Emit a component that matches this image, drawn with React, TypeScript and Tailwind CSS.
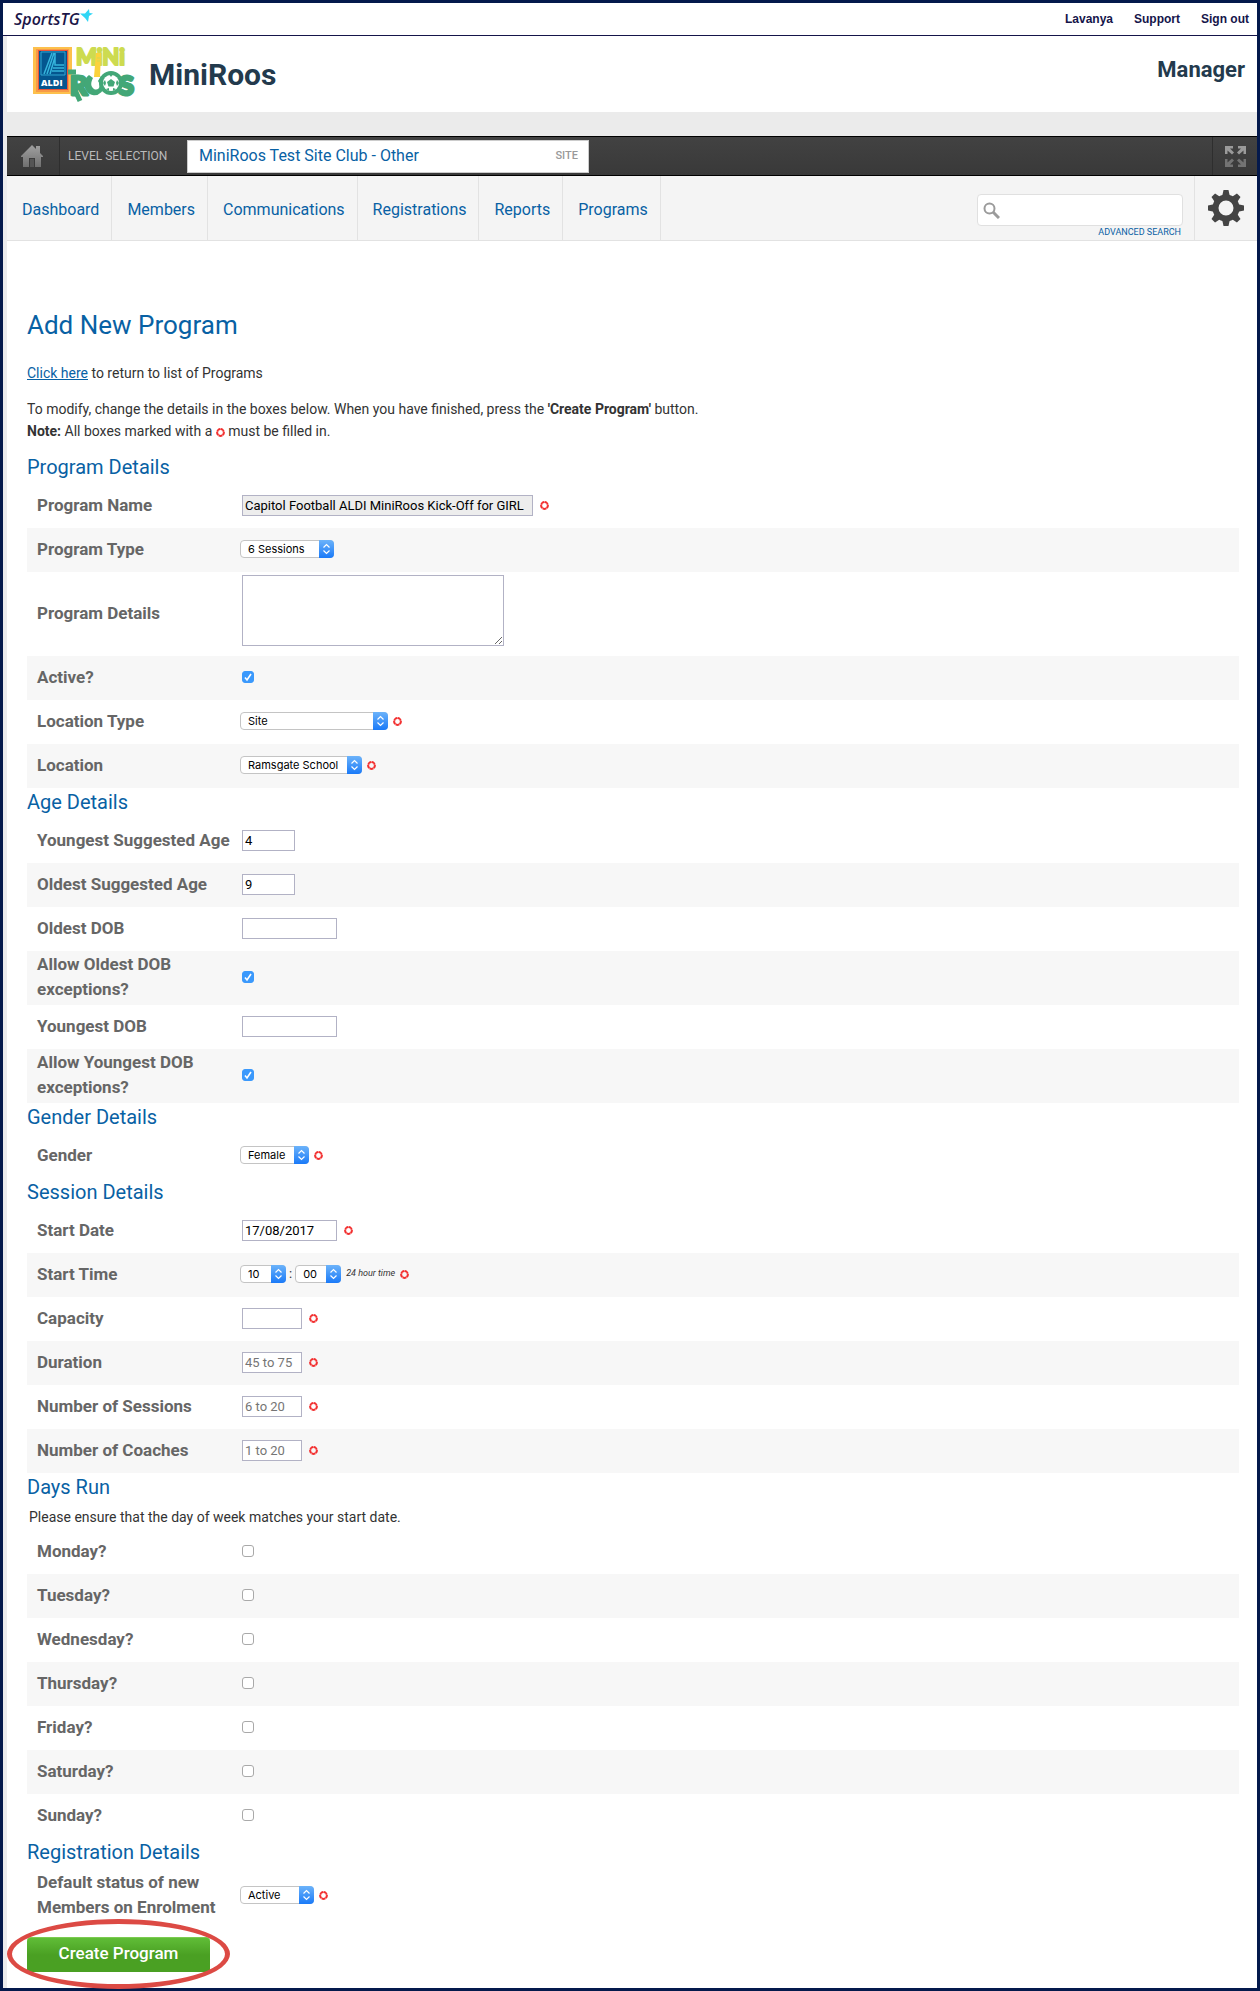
import React, { useState } from "react"

type Option = { label: string; width: string };

const navItems = ["Dashboard", "Members", "Communications", "Registrations", "Reports", "Programs"];
const days = ["Monday", "Tuesday", "Wednesday", "Thursday", "Friday", "Saturday", "Sunday"];

const Required = () => (
  <svg width="9" height="9" viewBox="0 0 9 9" className="inline-block shrink-0" aria-hidden="true">
    <circle cx="4.500" cy="4.500" r="3.400" fill="none" stroke="#f22e2e" strokeWidth="2" />
    <path stroke="#fff" strokeWidth=".5" d="M4.500 0v1.500M0 3.300l1.500.5M9 3.300l-1.500.5M1.800 8.200l1-1.500M7.200 8.200l-1-1.500" />
  </svg>
);

const HomeIcon = () => (
  <svg width="22" height="23" viewBox="0 0 22 23" aria-hidden="true">
    <defs>
      <linearGradient id="home" x1="0" y1="0" x2="0" y2="1">
        <stop offset="0" stopColor="#a0a0a0" />
        <stop offset="1" stopColor="#707070" />
      </linearGradient>
    </defs>
    <path fill="url(#home)" d="M11 0l4 4V1h4v7l3 3v1h-2v10h-6v-9H8v9H2V12H0v-1z" />
    <path fill="#555" d="M9 14h4v8H9z" />
  </svg>
);

const ExpandIcon = () => (
  <svg width="21" height="21" viewBox="0 0 21 21" fill="#9a9a9a" aria-hidden="true">
    <path d="M0 0h8v2.500H5L9 6.500 7 8.500 2.500 4.500V8H0z" />
    <path d="M21 0h-8v2.500h3L12 6.500l2 2 4.500-4V8H21z" />
    <path fill="#737373" d="M0 21h8v-2.500H5L9 14.500l-2-2-4.500 4V13H0z" />
    <path fill="#737373" d="M21 21h-8v-2.500h3L12 14.500l2-2 4.500 4V13H21z" />
  </svg>
);

const GearIcon = () => (
  <svg width="36" height="36" viewBox="-18 -18 36 36" aria-hidden="true">
    <g fill="#444">
      {[0, 45, 90, 135, 180, 225, 270, 315].map((a) => (
        <path key={a} transform={`rotate(${a})`} d="M-4 -11L-2.500 -18H2.500L4 -11z" />
      ))}
    </g>
    <circle r="10.500" fill="none" stroke="#444" strokeWidth="6" />
  </svg>
);

const MiniRoosLogo = () => (
  <svg width="104" height="57" viewBox="0 0 104 57" className="overflow-visible" role="img" aria-label="ALDI MiniRoos">
    <rect x="0" y="1" width="39" height="47" fill="#fdc04c" />
    <rect x="3" y="3" width="33" height="43" fill="#f79a48" />
    <rect x="5" y="4" width="30" height="40" fill="#e9563a" />
    <rect x="6" y="5" width="28" height="38" fill="#04568f" />
    <path d="M8 6h24v23H8z" stroke="#2fa6d2" fill="none" />
    <path d="M11 28l8-21M14 28l7-21M17 28l5-17M22 7v12h9M20 22h11M19 25h12" stroke="#35b4dc" strokeWidth="1.500" fill="none" />
    <text x="8" y="40" fontFamily="Open Sans, sans-serif" fontWeight="800" fontSize="9" fill="#fff">ALDI</text>
    <text x="43" y="19" fontFamily="Lato, sans-serif" fontWeight="900" fontSize="22" fill="#cddb50" stroke="#cddb50" strokeWidth="2" strokeLinejoin="round">MiNi</text>
    <g fontFamily="Lato, sans-serif" fontWeight="900" fontSize="27" fill="#43a777" stroke="#43a777" strokeWidth="3" strokeLinejoin="round">
      <text x="37" y="49">R</text>
      <text x="86" y="49">S</text>
    </g>
    <path d="M35 26l8 0M42 44l5 11" stroke="#43a777" strokeWidth="5" />
    <path d="M63 7h5l-1 24h-6z" fill="#fbd23c" />
    <path d="M64 12h3M64 15h3" stroke="#cddb50" />
    <path d="M56 29a10 11 0 1 0 12 1l-3 5c4 6 0 10-4 8-4-3-3-7-1-11z" fill="#43a777" />
    <circle cx="78" cy="37" r="12" fill="#43a777" />
    <circle cx="78" cy="37" r="8" fill="#fff" />
    <path d="M78 33l4 3-1.500 4.500h-5L74 36zM76 28h4l-2 3zM70 37l2-3 1 3-1 3zM86 37l-2-3-1 3 1 3zM73 43l3-1 0 3zM83 43l-3-1 0 3z" fill="#43a777" />
  </svg>
);

const SelectBox = ({ id, label, width }: Option & { id: string }) => (
  <span className={`relative inline-flex h-[18px] ${width}`}>
    <select id={id} aria-label={id} defaultValue={label} className="h-full w-full appearance-none rounded border border-[#c4c4c4] bg-white pl-[7px] font-[Inter,sans-serif] text-[11px] leading-4 text-black">
      <option>{label}</option>
    </select>
    <svg className="pointer-events-none absolute top-0 right-0" width="15" height="18" viewBox="0 0 15 18" aria-hidden="true">
      <defs>
        <linearGradient id="arrows" x1="0" y1="0" x2="0" y2="1">
          <stop offset="0" stopColor="#6cb3fa" />
          <stop offset="1" stopColor="#1a7af8" />
        </linearGradient>
      </defs>
      <path fill="url(#arrows)" d="M0 0h11a4 4 0 0 1 4 4v10a4 4 0 0 1-4 4H0z" />
      <path d="M4.500 7.500l3-3 3 3M4.500 10.500l3 3 3-3" fill="none" stroke="#fff" strokeWidth="1.200" />
    </svg>
  </span>
);

const TextBox = ({ id, width, ...rest }: { id: string; width: string } & React.InputHTMLAttributes<HTMLInputElement>) => (
  <input
    id={id}
    type="text"
    className={`mr-0.5 ml-0.5 h-[21px] border border-[#b2b2c5] bg-white px-0.5 text-[13px] text-black placeholder:text-[#757575] read-only:bg-[#ededed] ${width}`}
    {...rest}
  />
);

const CheckBox = ({ id, initial = false }: { id: string; initial?: boolean }) => {
  const [checked, setChecked] = useState(initial);
  return (
    <span className="relative ml-0.5 flex size-3">
      <input
        id={id}
        type="checkbox"
        checked={checked}
        onChange={(e) => setChecked(e.target.checked)}
        className="size-3 appearance-none rounded-[3px] border border-[#a9a9a9] bg-white checked:border-[#3b99fc] checked:bg-[#3b99fc]"
      />
      {checked && (
        <svg className="pointer-events-none absolute inset-0" width="12" height="12" viewBox="0 0 12 12" aria-hidden="true">
          <path d="M3 6.500l2 2.500 4-6" fill="none" stroke="#fff" strokeWidth="1.600" />
        </svg>
      )}
    </span>
  );
};

const Row = ({ label, id, shaded, required, children }: { label: string; id: string; shaded?: boolean; required?: boolean; children: React.ReactNode }) => (
  <div className={`flex min-h-11 items-center pb-0.5 ${shaded ? "bg-[#f7f7f7]" : ""}`}>
    <label htmlFor={id} className="w-[213px] shrink-0 py-px pl-2.5 text-[17px] leading-[25px] font-bold text-[#666]">
      {label}
    </label>
    <div className="flex items-center gap-[5px]">
      {children}
      {required && <Required />}
    </div>
  </div>
);

const Heading = ({ children }: { children: React.ReactNode }) => (
  <h2 className="pb-0.5 text-[20px] leading-[29px] text-[#0861a4] last:pb-0">{children}</h2>
);

export default function App() {
  return (
    <div className="min-h-screen border-3 border-[#04194c] bg-white font-[Roboto,sans-serif] text-[#333]">
      {/* top bar */}
      <div className="flex h-[33px] items-center justify-between border-b border-[#15154a] pr-2 pl-[11px]">
        <div className="flex items-center text-[#1b1548]">
          <span className="font-['Open_Sans',sans-serif] text-[16px] font-semibold italic">SportsTG</span>
          <svg className="mb-2" width="13" height="13" viewBox="0 0 13 13" aria-hidden="true">
            <path fill="#2fd6f5" d="M9 0l.5 4 3.500.5-4 2.500-1 6-3-4-5-4.500 5 0z" />
          </svg>
        </div>
        <nav className="flex gap-[21px] font-['Liberation_Sans',sans-serif] text-[12px] font-bold text-[#15154a]">
          <a href="#">Lavanya</a>
          <a href="#">Support</a>
          <a href="#">Sign out</a>
        </nav>
      </div>

      <div className="border-l-4 border-[#ebebed]">
        {/* club header */}
        <header className="flex h-[76px] justify-between pr-3 pl-[26px]">
          <div className="flex items-center gap-3">
            <MiniRoosLogo />
            <span className="text-[30px] font-bold text-[#233a4d]">MiniRoos</span>
          </div>
          <span className="pt-4 text-[22px] leading-9 font-bold text-[#233a4d]">Manager</span>
        </header>
        <div className="h-6 bg-[#ebebeb]" />

        {/* level selection */}
        <div className="flex h-10 items-center border-y border-black bg-linear-to-b from-[#424242] to-[#393939]">
          <a href="#" aria-label="Home" className="flex h-full w-[53px] items-center border-r border-[#2e2e2e] pl-3.5">
            <HomeIcon />
          </a>
          <span className="w-[127px] pl-2 text-[12px] text-[#bbb]">LEVEL SELECTION</span>
          <div className="flex h-[33px] w-[402px] items-center justify-between border border-[#ccc] bg-white pr-2.5 pl-[11px]">
            <span className="text-[16px] text-[#0861a4]">MiniRoos Test Site Club - Other</span>
            <span className="text-[11px] font-medium text-[#999]">SITE</span>
          </div>
          <button aria-label="Full screen" className="ml-auto flex h-full w-[45px] items-center border-l border-[#2e2e2e] pl-3">
            <ExpandIcon />
          </button>
        </div>

        {/* menu */}
        <div className="flex h-[65px] border-b border-[#e2e2e2] bg-[#f4f4f4]">
          <nav className="flex text-[16px] text-[#0861a4]">
            {navItems.map((item) => (
              <a key={item} href="#" className="flex items-center border-r border-[#e2e2e2] pt-[3px] pr-3 pl-[15px]">{item}</a>
            ))}
          </nav>
          <div className="ml-auto flex flex-col items-end pt-[18px] pr-[11px]">
            <div className="relative w-[206px]">
              <input aria-label="Search" type="text" className="h-8 w-full rounded border border-[#e0e0e0] bg-white pl-7" />
              <svg className="pointer-events-none absolute top-2 left-1.5" width="17" height="17" viewBox="0 0 17 17" fill="none" stroke="#9b9b9b" aria-hidden="true">
                <circle cx="6.500" cy="6.500" r="5" strokeWidth="2" />
                <path d="M10 10l6 6" strokeWidth="3" />
              </svg>
            </div>
            <a href="#" className="pr-0.5 text-[9px] leading-3 text-[#0861a4]">ADVANCED SEARCH</a>
          </div>
          <button aria-label="Settings" className="flex w-[63px] justify-center border-l border-[#e2e2e2] pt-3.5">
            <GearIcon />
          </button>
        </div>

        <form className="pt-16 pr-[18px] pb-4 pl-5" onSubmit={(e) => e.preventDefault()}>
          <h1 className="text-[26px] leading-10 text-[#0861a4]">Add New Program</h1>
          <p className="pt-[17px] text-[14px] leading-[22px]">
            <a href="#" className="text-[#0861a4] underline">Click here</a> to return to list of Programs
          </p>
          <p className="pt-3.5 pb-[11px] text-[14px] leading-[22px]">
            To modify, change the details in the boxes below. When you have finished, press the <b>'Create Program'</b> button.
            <br />
            <b>Note:</b> All boxes marked with a <Required /> must be filled in.
          </p>

          <Heading>Program Details</Heading>
          <Row label="Program Name" id="name" required>
            <TextBox id="name" width="w-[291px]" readOnly defaultValue="Capitol Football ALDI MiniRoos Kick-Off for GIRL" />
          </Row>
          <Row label="Program Type" id="type" shaded>
            <SelectBox id="type" label="6 Sessions" width="w-[94px]" />
          </Row>
          <Row label="Program Details" id="details">
            <textarea id="details" className="mt-[3px] mb-2 ml-0.5 block h-[71px] w-[262px] border border-[#b2b2c5]" />
          </Row>
          <Row label="Active?" id="active" shaded>
            <CheckBox id="active" initial />
          </Row>
          <Row label="Location Type" id="locationType" required>
            <SelectBox id="locationType" label="Site" width="w-[148px]" />
          </Row>
          <Row label="Location" id="location" shaded required>
            <SelectBox id="location" label="Ramsgate School" width="w-[122px]" />
          </Row>

          <Heading>Age Details</Heading>
          <Row label="Youngest Suggested Age" id="youngestAge">
            <TextBox id="youngestAge" width="w-[53px]" defaultValue="4" />
          </Row>
          <Row label="Oldest Suggested Age" id="oldestAge" shaded>
            <TextBox id="oldestAge" width="w-[53px]" defaultValue="9" />
          </Row>
          <Row label="Oldest DOB" id="oldestDob">
            <TextBox id="oldestDob" width="w-[95px]" />
          </Row>
          <Row label="Allow Oldest DOB exceptions?" id="allowOldest" shaded>
            <CheckBox id="allowOldest" initial />
          </Row>
          <Row label="Youngest DOB" id="youngestDob">
            <TextBox id="youngestDob" width="w-[95px]" />
          </Row>
          <Row label="Allow Youngest DOB exceptions?" id="allowYoungest" shaded>
            <CheckBox id="allowYoungest" initial />
          </Row>

          <Heading>Gender Details</Heading>
          <Row label="Gender" id="gender" required>
            <SelectBox id="gender" label="Female" width="w-[69px]" />
          </Row>

          <Heading>Session Details</Heading>
          <Row label="Start Date" id="startDate" required>
            <TextBox id="startDate" width="w-[95px]" defaultValue="17/08/2017" />
          </Row>
          <Row label="Start Time" id="hour" shaded required>
            <div className="flex items-center gap-[3px] text-[13px]">
              <SelectBox id="hour" label="10" width="w-[46px]" />
              <span>:</span>
              <SelectBox id="minute" label="00" width="w-[46px]" />
            </div>
            <i className="text-[9px]">24 hour time</i>
          </Row>
          <Row label="Capacity" id="capacity" required>
            <TextBox id="capacity" width="w-[60px]" />
          </Row>
          <Row label="Duration" id="duration" shaded required>
            <TextBox id="duration" width="w-[60px]" placeholder="45 to 75" />
          </Row>
          <Row label="Number of Sessions" id="sessions" required>
            <TextBox id="sessions" width="w-[60px]" placeholder="6 to 20" />
          </Row>
          <Row label="Number of Coaches" id="coaches" shaded required>
            <TextBox id="coaches" width="w-[60px]" placeholder="1 to 20" />
          </Row>

          <Heading>Days Run</Heading>
          <p className="pt-0.5 pb-0.5 pl-0.5 text-[14px] leading-[22px]">Please ensure that the day of week matches your start date.</p>
          {days.map((day, i) => (
            <Row key={day} label={`${day}?`} id={day} shaded={i % 2 === 1}>
              <CheckBox id={day} />
            </Row>
          ))}

          <Heading>Registration Details</Heading>
          <Row label="Default status of new Members on Enrolment" id="status" required>
            <SelectBox id="status" label="Active" width="w-[74px]" />
          </Row>

          <div className="relative mt-3.5 w-[183px]">
            <button type="submit" className="h-[35px] w-full rounded-t border-t border-[#7ccb50] bg-linear-to-b from-[#60bd37] to-[#4aa023] to-50% pb-0.5 text-[17px] font-medium text-white">
              Create Program
            </button>
            <div className="pointer-events-none absolute -top-[18px] -left-5 h-[70px] w-[223px] rounded-[50%] border-5 border-[#dc4a44]" />
          </div>
        </form>
      </div>
    </div>
  );
}
